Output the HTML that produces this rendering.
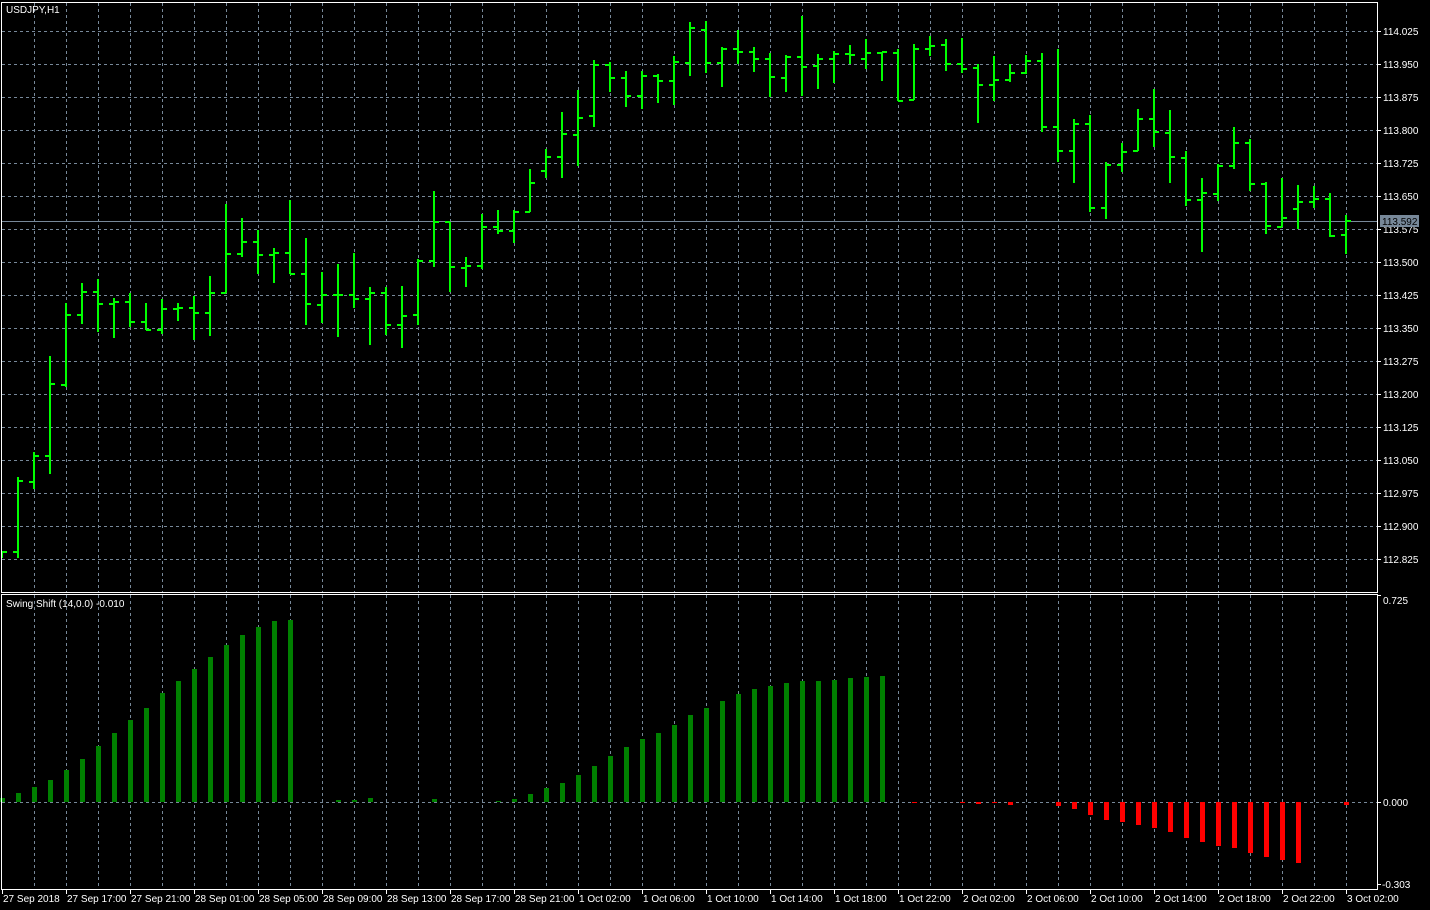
<!DOCTYPE html>
<html><head><meta charset="utf-8"><style>
html,body{margin:0;padding:0;background:#000;width:1430px;height:910px;overflow:hidden}
svg{display:block}
text{font-family:"Liberation Sans",sans-serif;font-size:10px;fill:#fff}
</style></head><body>
<svg width="1430" height="910" viewBox="0 0 1430 910" xmlns="http://www.w3.org/2000/svg">
<rect width="1430" height="910" fill="#000"/>
<g stroke="#778899" stroke-width="1" stroke-dasharray="3,3" shape-rendering="crispEdges">
<path d="M2 31.5H1377M2 64.5H1377M2 97.5H1377M2 130.5H1377M2 163.5H1377M2 196.5H1377M2 229.5H1377M2 262.5H1377M2 295.5H1377M2 328.5H1377M2 361.5H1377M2 394.5H1377M2 427.5H1377M2 460.5H1377M2 493.5H1377M2 526.5H1377M2 559.5H1377"/>
<path d="M34.5 3V592M66.5 3V592M98.5 3V592M130.5 3V592M162.5 3V592M194.5 3V592M226.5 3V592M258.5 3V592M290.5 3V592M322.5 3V592M354.5 3V592M386.5 3V592M418.5 3V592M450.5 3V592M482.5 3V592M514.5 3V592M546.5 3V592M578.5 3V592M610.5 3V592M642.5 3V592M674.5 3V592M706.5 3V592M738.5 3V592M770.5 3V592M802.5 3V592M834.5 3V592M866.5 3V592M898.5 3V592M930.5 3V592M962.5 3V592M994.5 3V592M1026.5 3V592M1058.5 3V592M1090.5 3V592M1122.5 3V592M1154.5 3V592M1186.5 3V592M1218.5 3V592M1250.5 3V592M1282.5 3V592M1314.5 3V592M1346.5 3V592"/>
<path d="M34.5 595V889M66.5 595V889M98.5 595V889M130.5 595V889M162.5 595V889M194.5 595V889M226.5 595V889M258.5 595V889M290.5 595V889M322.5 595V889M354.5 595V889M386.5 595V889M418.5 595V889M450.5 595V889M482.5 595V889M514.5 595V889M546.5 595V889M578.5 595V889M610.5 595V889M642.5 595V889M674.5 595V889M706.5 595V889M738.5 595V889M770.5 595V889M802.5 595V889M834.5 595V889M866.5 595V889M898.5 595V889M930.5 595V889M962.5 595V889M994.5 595V889M1026.5 595V889M1058.5 595V889M1090.5 595V889M1122.5 595V889M1154.5 595V889M1186.5 595V889M1218.5 595V889M1250.5 595V889M1282.5 595V889M1314.5 595V889M1346.5 595V889"/>
<path d="M2 802.5H1377"/>
</g>
<path d="M2 221.5H1377" stroke="#778899" stroke-width="1" shape-rendering="crispEdges"/>
<path fill="none" stroke="#00ff00" stroke-width="2" shape-rendering="crispEdges" d="
M2 552V558M2 552h5
M18 477V558M13 552h5M18 481h5
M34 452V489M29 482h5M34 456h5
M50 356V474M45 456h5M50 384h5
M66 303V387M61 385h5M66 315h5
M82 283V324M77 315h5M82 292h5
M98 279V332M93 292h5M98 304h5
M114 298V338M109 304h5M114 302h5
M130 293V327M125 302h5M130 322h5
M146 303V330M141 322h5M146 330h5
M162 299V334M157 330h5M162 309h5
M178 303V321M173 309h5M178 308h5
M194 296V340M189 308h5M194 313h5
M210 276V336M205 313h5M210 293h5
M226 204V293M221 293h5M226 254h5
M242 218V257M237 254h5M242 242h5
M258 230V274M253 242h5M258 255h5
M274 248V283M269 255h5M274 253h5
M290 200V274M285 253h5M290 274h5
M306 238V325M301 274h5M306 304h5
M322 272V323M317 305h5M322 295h5
M338 264V337M333 295h5M338 295h5
M354 253V308M349 295h5M354 299h5
M370 287V345M365 299h5M370 293h5
M386 287V335M381 293h5M386 325h5
M402 286V348M397 325h5M402 316h5
M418 259V325M413 315h5M418 261h5
M434 191V267M429 261h5M434 222h5
M450 222V292M445 222h5M450 267h5
M466 257V287M461 268h5M466 266h5
M482 214V269M477 266h5M482 227h5
M498 210V234M493 227h5M498 231h5
M514 210V243M509 231h5M514 212h5
M530 169V212M525 212h5M530 183h5
M546 149V178M541 171h5M546 157h5
M562 112V178M557 157h5M562 134h5
M578 90V166M573 135h5M578 118h5
M594 60V127M589 116h5M594 65h5
M610 62V92M605 65h5M610 78h5
M626 71V107M621 78h5M626 96h5
M642 71V109M637 96h5M642 76h5
M658 74V103M653 76h5M658 81h5
M674 56V105M669 81h5M674 62h5
M690 22V76M685 63h5M690 28h5
M706 21V73M701 30h5M706 63h5
M722 47V87M717 63h5M722 49h5
M738 30V64M733 49h5M738 52h5
M754 47V72M749 52h5M754 59h5
M770 53V97M765 59h5M770 77h5
M786 55V92M781 78h5M786 57h5
M802 16V96M797 57h5M802 67h5
M818 54V89M813 66h5M818 59h5
M834 51V83M829 59h5M834 54h5
M850 45V64M845 54h5M850 55h5
M866 39V69M861 59h5M866 53h5
M882 52V81M877 53h5M882 52h5
M898 49V101M893 53h5M898 101h5
M914 44V100M909 100h5M914 49h5
M930 36V56M925 49h5M930 46h5
M946 39V71M941 45h5M946 64h5
M962 38V73M957 64h5M962 69h5
M978 64V123M973 68h5M978 85h5
M994 56V101M989 85h5M994 80h5
M1010 64V82M1005 80h5M1010 73h5
M1026 55V74M1021 73h5M1026 61h5
M1042 53V132M1037 61h5M1042 127h5
M1058 49V162M1053 127h5M1058 151h5
M1074 119V183M1069 151h5M1074 124h5
M1090 115V212M1085 124h5M1090 208h5
M1106 162V219M1101 208h5M1106 165h5
M1122 143V172M1117 165h5M1122 152h5
M1138 109V151M1133 151h5M1138 119h5
M1154 89V147M1149 119h5M1154 132h5
M1170 110V183M1165 133h5M1170 157h5
M1186 151V206M1181 158h5M1186 200h5
M1202 178V252M1197 200h5M1202 193h5
M1218 164V201M1213 194h5M1218 166h5
M1234 127V169M1229 166h5M1234 143h5
M1250 139V191M1245 143h5M1250 184h5
M1266 182V234M1261 184h5M1266 226h5
M1282 178V227M1277 227h5M1282 218h5
M1298 185V229M1293 209h5M1298 202h5
M1314 186V208M1309 202h5M1314 199h5
M1330 193V237M1325 199h5M1330 236h5
M1346 215V254M1341 235h5M1346 221h5"/>
<path fill="none" stroke="#008000" stroke-width="5" d="M2.5 802V798M18.5 802V793M34.5 802V787M50.5 802V780M66.5 802V770M82.5 802V759M98.5 802V746M114.5 802V733M130.5 802V720M146.5 802V708M162.5 802V693M178.5 802V681M194.5 802V669M210.5 802V657M226.5 802V645M242.5 802V635M258.5 802V627M274.5 802V621M290.5 802V620M338.5 802V800M354.5 802V800M370.5 802V798M434.5 802V799M498.5 802V801M514.5 802V799M530.5 802V794M546.5 802V788M562.5 802V783M578.5 802V775M594.5 802V766M610.5 802V756M626.5 802V747M642.5 802V739M658.5 802V733M674.5 802V725M690.5 802V715M706.5 802V708M722.5 802V701M738.5 802V694M754.5 802V689M770.5 802V686M786.5 802V683M802.5 802V681M818.5 802V681M834.5 802V680M850.5 802V678M866.5 802V677M882.5 802V676"/>
<path fill="none" stroke="#ff0000" stroke-width="5" d="M914.5 802V803M962.5 802V803M978.5 802V804M994.5 802V803M1010.5 802V805M1058.5 802V806M1074.5 802V809M1090.5 802V815M1106.5 802V820M1122.5 802V822M1138.5 802V825M1154.5 802V828M1170.5 802V832M1186.5 802V838M1202.5 802V842M1218.5 802V846M1234.5 802V848M1250.5 802V853M1266.5 802V857M1282.5 802V860M1298.5 802V863M1346.5 802V805"/>
<g stroke="#fff" stroke-width="1" fill="none" shape-rendering="crispEdges">
<path d="M1.5 2.5H1377.5V592.5H1.5Z"/>
<path d="M1.5 594.5H1377.5V889.5H1.5Z"/>
<path d="M1377 31.5h4M1377 64.5h4M1377 97.5h4M1377 130.5h4M1377 163.5h4M1377 196.5h4M1377 229.5h4M1377 262.5h4M1377 295.5h4M1377 328.5h4M1377 361.5h4M1377 394.5h4M1377 427.5h4M1377 460.5h4M1377 493.5h4M1377 526.5h4M1377 559.5h4M1377 595.5h4M1377 802.5h4M1377 884.5h4"/>
<path d="M2.5 889v5M66.5 889v5M130.5 889v5M194.5 889v5M258.5 889v5M322.5 889v5M386.5 889v5M450.5 889v5M514.5 889v5M578.5 889v5M642.5 889v5M706.5 889v5M770.5 889v5M834.5 889v5M898.5 889v5M962.5 889v5M1026.5 889v5M1090.5 889v5M1154.5 889v5M1218.5 889v5M1282.5 889v5M1346.5 889v5"/>
</g>
<text x="6" y="13">USDJPY,H1</text>
<text x="6" y="607">Swing Shift (14,0.0) -0.010</text>
<g>
<text x="1383" y="35">114.025</text>
<text x="1383" y="68">113.950</text>
<text x="1383" y="101">113.875</text>
<text x="1383" y="134">113.800</text>
<text x="1383" y="167">113.725</text>
<text x="1383" y="200">113.650</text>
<text x="1383" y="233">113.575</text>
<text x="1383" y="266">113.500</text>
<text x="1383" y="299">113.425</text>
<text x="1383" y="332">113.350</text>
<text x="1383" y="365">113.275</text>
<text x="1383" y="398">113.200</text>
<text x="1383" y="431">113.125</text>
<text x="1383" y="464">113.050</text>
<text x="1383" y="497">112.975</text>
<text x="1383" y="530">112.900</text>
<text x="1383" y="563">112.825</text>
<text x="1383" y="604">0.725</text>
<text x="1383" y="806">0.000</text>
<text x="1382" y="888">-0.303</text>
</g>
<rect x="1380" y="215" width="39" height="12" fill="#778899"/>
<text x="1382" y="225" style="fill:#000">113.592</text>
<g>
<text x="3" y="902">27 Sep 2018</text>
<text x="67" y="902">27 Sep 17:00</text>
<text x="131" y="902">27 Sep 21:00</text>
<text x="195" y="902">28 Sep 01:00</text>
<text x="259" y="902">28 Sep 05:00</text>
<text x="323" y="902">28 Sep 09:00</text>
<text x="387" y="902">28 Sep 13:00</text>
<text x="451" y="902">28 Sep 17:00</text>
<text x="515" y="902">28 Sep 21:00</text>
<text x="579" y="902">1 Oct 02:00</text>
<text x="643" y="902">1 Oct 06:00</text>
<text x="707" y="902">1 Oct 10:00</text>
<text x="771" y="902">1 Oct 14:00</text>
<text x="835" y="902">1 Oct 18:00</text>
<text x="899" y="902">1 Oct 22:00</text>
<text x="963" y="902">2 Oct 02:00</text>
<text x="1027" y="902">2 Oct 06:00</text>
<text x="1091" y="902">2 Oct 10:00</text>
<text x="1155" y="902">2 Oct 14:00</text>
<text x="1219" y="902">2 Oct 18:00</text>
<text x="1283" y="902">2 Oct 22:00</text>
<text x="1347" y="902">3 Oct 02:00</text>
</g>
</svg>
</body></html>
